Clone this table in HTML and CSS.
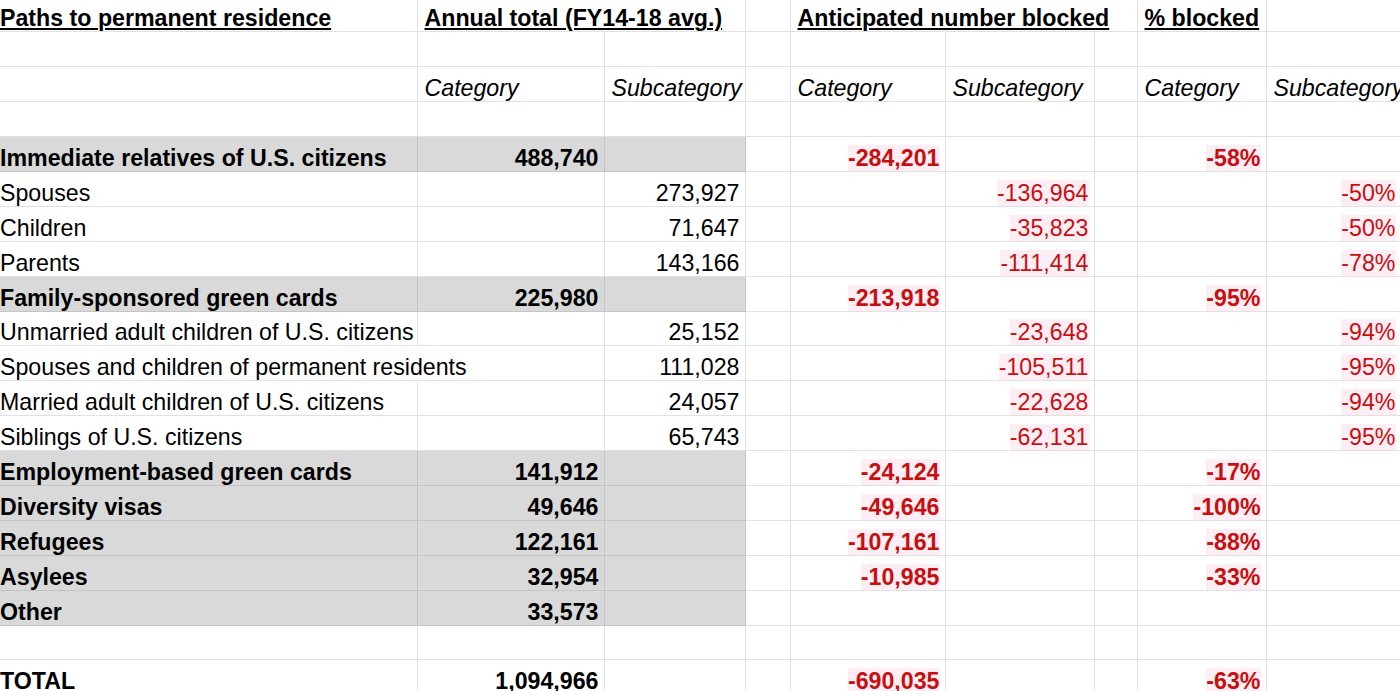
FILE: index.html
```html
<!DOCTYPE html>
<html lang="en">
<head>
<meta charset="utf-8">
<title>Paths to permanent residence</title>
<link rel="stylesheet" href="styles.css">
</head>
<body>
<table class="sheet">
  <colgroup>
    <col class="c-a"><col class="c-b"><col class="c-c"><col class="c-d"><col class="c-e"><col class="c-f"><col class="c-g"><col class="c-h"><col class="c-i">
  </colgroup>
  <tbody>
    <tr>
      <td class="head"><span>Paths to permanent residence</span></td>
      <td class="head" colspan="2"><span>Annual total (FY14-18 avg.)</span></td>
      <td></td>
      <td class="head" colspan="3"><span>Anticipated number blocked</span></td>
      <td class="head"><span>% blocked</span></td>
      <td></td>
    </tr>
    <tr><td></td><td></td><td></td><td></td><td></td><td></td><td></td><td></td><td></td></tr>
    <tr class="labels">
      <td></td><td>Category</td><td>Subcategory</td><td></td><td>Category</td><td>Subcategory</td><td></td><td>Category</td><td>Subcategory</td>
    </tr>
    <tr><td></td><td></td><td></td><td></td><td></td><td></td><td></td><td></td><td></td></tr>

    <tr class="cat">
      <td class="shade">Immediate relatives of U.S. citizens</td><td class="shade num">488,740</td><td class="shade"></td><td></td>
      <td class="num"><span class="neg">-284,201</span></td><td></td><td></td><td class="num"><span class="neg">-58%</span></td><td></td>
    </tr>
    <tr>
      <td>Spouses</td><td></td><td class="num">273,927</td><td></td><td></td><td class="num"><span class="neg">-136,964</span></td><td></td><td></td><td class="num"><span class="neg">-50%</span></td>
    </tr>
    <tr>
      <td>Children</td><td></td><td class="num">71,647</td><td></td><td></td><td class="num"><span class="neg">-35,823</span></td><td></td><td></td><td class="num"><span class="neg">-50%</span></td>
    </tr>
    <tr>
      <td>Parents</td><td></td><td class="num">143,166</td><td></td><td></td><td class="num"><span class="neg">-111,414</span></td><td></td><td></td><td class="num"><span class="neg">-78%</span></td>
    </tr>

    <tr class="cat">
      <td class="shade">Family-sponsored green cards</td><td class="shade num">225,980</td><td class="shade"></td><td></td>
      <td class="num"><span class="neg">-213,918</span></td><td></td><td></td><td class="num"><span class="neg">-95%</span></td><td></td>
    </tr>
    <tr>
      <td>Unmarried adult children of U.S. citizens</td><td></td><td class="num">25,152</td><td></td><td></td><td class="num"><span class="neg">-23,648</span></td><td></td><td></td><td class="num"><span class="neg">-94%</span></td>
    </tr>
    <tr>
      <td colspan="2">Spouses and children of permanent residents</td><td class="num">111,028</td><td></td><td></td><td class="num"><span class="neg">-105,511</span></td><td></td><td></td><td class="num"><span class="neg">-95%</span></td>
    </tr>
    <tr>
      <td>Married adult children of U.S. citizens</td><td></td><td class="num">24,057</td><td></td><td></td><td class="num"><span class="neg">-22,628</span></td><td></td><td></td><td class="num"><span class="neg">-94%</span></td>
    </tr>
    <tr>
      <td>Siblings of U.S. citizens</td><td></td><td class="num">65,743</td><td></td><td></td><td class="num"><span class="neg">-62,131</span></td><td></td><td></td><td class="num"><span class="neg">-95%</span></td>
    </tr>

    <tr class="cat">
      <td class="shade">Employment-based green cards</td><td class="shade num">141,912</td><td class="shade"></td><td></td>
      <td class="num"><span class="neg">-24,124</span></td><td></td><td></td><td class="num"><span class="neg">-17%</span></td><td></td>
    </tr>
    <tr class="cat">
      <td class="shade">Diversity visas</td><td class="shade num">49,646</td><td class="shade"></td><td></td>
      <td class="num"><span class="neg">-49,646</span></td><td></td><td></td><td class="num"><span class="neg">-100%</span></td><td></td>
    </tr>
    <tr class="cat">
      <td class="shade">Refugees</td><td class="shade num">122,161</td><td class="shade"></td><td></td>
      <td class="num"><span class="neg">-107,161</span></td><td></td><td></td><td class="num"><span class="neg">-88%</span></td><td></td>
    </tr>
    <tr class="cat">
      <td class="shade">Asylees</td><td class="shade num">32,954</td><td class="shade"></td><td></td>
      <td class="num"><span class="neg">-10,985</span></td><td></td><td></td><td class="num"><span class="neg">-33%</span></td><td></td>
    </tr>
    <tr class="cat">
      <td class="shade">Other</td><td class="shade num">33,573</td><td class="shade"></td><td></td>
      <td></td><td></td><td></td><td></td><td></td>
    </tr>
    <tr><td></td><td></td><td></td><td></td><td></td><td></td><td></td><td></td><td></td></tr>
    <tr class="cat">
      <td>TOTAL</td><td class="num">1,094,966</td><td></td><td></td>
      <td class="num"><span class="neg">-690,035</span></td><td></td><td></td><td class="num"><span class="neg">-63%</span></td><td></td>
    </tr>
  </tbody>
</table>
</body>
</html>
```

FILE: styles.css
```css
html, body {
  margin: 0;
  padding: 0;
  background: #ffffff;
  overflow: hidden;
}

body {
  width: 1400px;
  height: 691px;
  font-family: "Liberation Sans", Arial, sans-serif;
  font-size: 23.2px;
  color: #000000;
}

.sheet {
  border-collapse: collapse;
  table-layout: fixed;
  width: 1408px;
  margin-left: -7px;
  margin-top: -3px;
}

.c-a { width: 424px; }
.c-b { width: 187px; }
.c-c { width: 141px; }
.c-d { width: 45px; }
.c-e { width: 155px; }
.c-f { width: 149px; }
.c-g { width: 43px; }
.c-h { width: 129px; }
.c-i { width: 135px; }

.sheet tr {
  height: 34.9px;
}

.sheet td {
  border: 1px solid #e1e1e1;
  border-top: none;
  padding: 0 5px 0 7px;
  vertical-align: bottom;
  line-height: 26px;
  white-space: nowrap;
  overflow: visible;
}

.sheet td:first-child {
  border-left: none;
}

.head span {
  font-weight: bold;
  text-decoration: underline;
  text-decoration-thickness: 2px;
  text-underline-offset: 2px;
}

.labels td {
  font-style: italic;
}

.cat td {
  font-weight: bold;
}

.shade {
  background: #d9d9d9;
  border-color: #c4c4c4 !important;
}

.num {
  text-align: right;
}

.neg {
  color: #c80f0f;
  background: #fdeef5;
}
```
